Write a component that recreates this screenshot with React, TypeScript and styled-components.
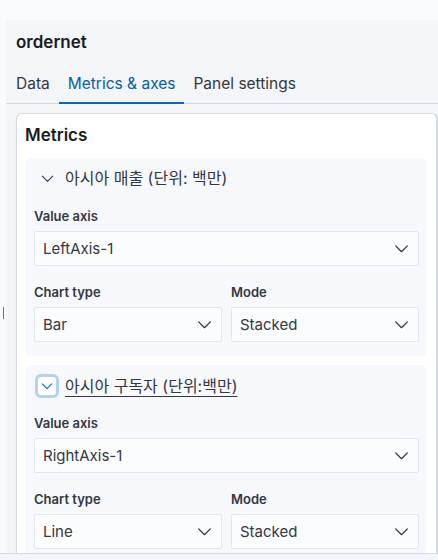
import React from "react";
import styled, { createGlobalStyle } from "styled-components";

const Global = createGlobalStyle`
  html, body { margin: 0; padding: 0; }
  body {
    background: #f9fafc;
    font-family: Inter, "Noto Sans CJK KR", sans-serif;
    color: #343741;
    width: 438px;
    height: 560px;
    overflow: hidden;
  }
`;

const Page = styled.div`
  display: flex;
  flex-direction: column;
  height: 560px;
`;

const Main = styled.div`
  display: flex;
  height: 553px;
  flex: none;
  padding-top: 20px;
  box-sizing: border-box;
  overflow: hidden;
`;

const Gutter = styled.div`
  width: 6px;
  flex: none;
  display: flex;
  justify-content: center;
  padding-top: 287px;
  box-sizing: border-box;
`;

const Grip = styled.div`
  width: 1px;
  height: 12px;
  background: #69707d;
`;

const Panel = styled.div`
  flex: 1;
  background: #f3f5f9;
  display: flex;
  flex-direction: column;
  min-width: 0;
  & > * { flex-shrink: 0; }
`;

const Title = styled.div`
  font-size: 17px;
  font-weight: 600;
  line-height: 24px;
  color: #1a1c21;
  padding: 10px 0 0 10px;
  height: 24px;
`;

const Tabs = styled.div`
  display: flex;
  align-items: flex-end;
  border-bottom: 1px solid #d3dae6;
  height: 50px;
  box-sizing: border-box;
  padding-left: 1px;
`;

const Tab = styled.div<{ $active?: boolean }>`
  padding: 0 9px 8px;
  font-size: 15.5px;
  line-height: 20px;
  color: ${(p) => (p.$active ? "#0061a6" : "#343741")};
  border-bottom: 2px solid ${(p) => (p.$active ? "#006bb8" : "transparent")};
  margin-bottom: -1px;
`;

const Card = styled.div`
  margin: 9px 0 0 10px;
  background: #fff;
  border: 1px solid #d3dae6;
  border-right-width: 2px;
  border-radius: 6px;
  padding: 8px 9px 0 8px;
  display: flex;
  flex-direction: column;
  gap: 9px;
  box-shadow: 0 1px 2px rgba(0, 0, 0, 0.05);
`;

const CardTitle = styled.div`
  font-size: 17px;
  font-weight: 600;
  line-height: 26px;
  color: #1a1c21;
  margin-bottom: 1px;
`;

const Section = styled.div`
  background: #f7f8fc;
  border-radius: 6px;
  padding: 0 8px 14px 9px;
`;

const SectionHead = styled.div`
  display: flex;
  align-items: center;
  height: 40px;
  gap: 6px;
`;

const ToggleBtn = styled.div<{ $focus?: boolean }>`
  width: 24px;
  height: 24px;
  box-sizing: border-box;
  display: flex;
  align-items: center;
  justify-content: center;
  border-radius: 6px;
  margin-left: 1px;
  ${(p) =>
    p.$focus
      ? `border: 3px solid #b4d2ec; background: #fff; color: #006bb8; margin-top: 2px;`
      : `color: #343741;`}
`;

const SectionName = styled.span<{ $link?: boolean }>`
  font-size: 16px;
  line-height: 22px;
  color: #343741;
  text-decoration: ${(p) => (p.$link ? "underline" : "none")};
  text-underline-offset: 4px;
  text-decoration-thickness: 1px;
  margin-top: ${(p) => (p.$link ? "2px" : "0")};
`;

const Field = styled.div`
  display: flex;
  flex-direction: column;
  gap: 6px;
  min-width: 0;
`;

const Label = styled.div<{ $first?: boolean }>`
  font-size: 13px;
  font-weight: 600;
  line-height: 18px;
  color: #343741;
  margin-top: ${(p) => (p.$first ? "9px" : "0")};
`;

const Row = styled.div`
  display: grid;
  grid-template-columns: 1fr 1fr;
  gap: 9px;
  margin-top: 17px;
`;

const Select = styled.div`
  height: 35px;
  box-sizing: border-box;
  background: #fbfcfd;
  border: 1px solid #e1e6ef;
  border-radius: 2px;
  display: flex;
  align-items: center;
  justify-content: space-between;
  padding: 0 8px 0 8px;
  font-size: 15px;
  color: #343741;
`;

const Footer = styled.div`
  flex: 1;
  border-top: 1px solid #d3dae6;
  background: #f3f5f9;
`;

const Chevron = ({ size = 14 }: { size?: number }) => (
  <svg width={size} height={size} viewBox="0 0 16 16" fill="none">
    <path d="M2.5 5.5 8 11l5.5-5.5" stroke="currentColor" strokeWidth="1.2" strokeLinecap="round" strokeLinejoin="round" />
  </svg>
);

const SelectBox = ({ value }: { value: string }) => (
  <Select>
    <span>{value}</span>
    <Chevron size={17} />
  </Select>
);

const MetricSection = ({
  name,
  axis,
  chart,
  focus,
}: {
  name: string;
  axis: string;
  chart: string;
  focus?: boolean;
}) => (
  <Section>
    <SectionHead>
      <ToggleBtn $focus={focus}>
        <Chevron size={focus ? 14 : 15} />
      </ToggleBtn>
      <SectionName $link={focus}>{name}</SectionName>
    </SectionHead>
    <Field>
      <Label $first>Value axis</Label>
      <SelectBox value={axis} />
    </Field>
    <Row>
      <Field>
        <Label>Chart type</Label>
        <SelectBox value={chart} />
      </Field>
      <Field>
        <Label>Mode</Label>
        <SelectBox value="Stacked" />
      </Field>
    </Row>
  </Section>
);

export default function App() {
  return (
    <Page>
      <Global />
      <Main>
        <Gutter>
          <Grip />
        </Gutter>
        <Panel>
          <Title>ordernet</Title>
          <Tabs>
            <Tab>Data</Tab>
            <Tab $active>Metrics &amp; axes</Tab>
            <Tab>Panel settings</Tab>
          </Tabs>
          <Card>
            <CardTitle>Metrics</CardTitle>
            <MetricSection name="아시아 매출 (단위: 백만)" axis="LeftAxis-1" chart="Bar" />
            <MetricSection name="아시아 구독자 (단위:백만)" axis="RightAxis-1" chart="Line" focus />
          </Card>
        </Panel>
      </Main>
      <Footer />
    </Page>
  );
}
